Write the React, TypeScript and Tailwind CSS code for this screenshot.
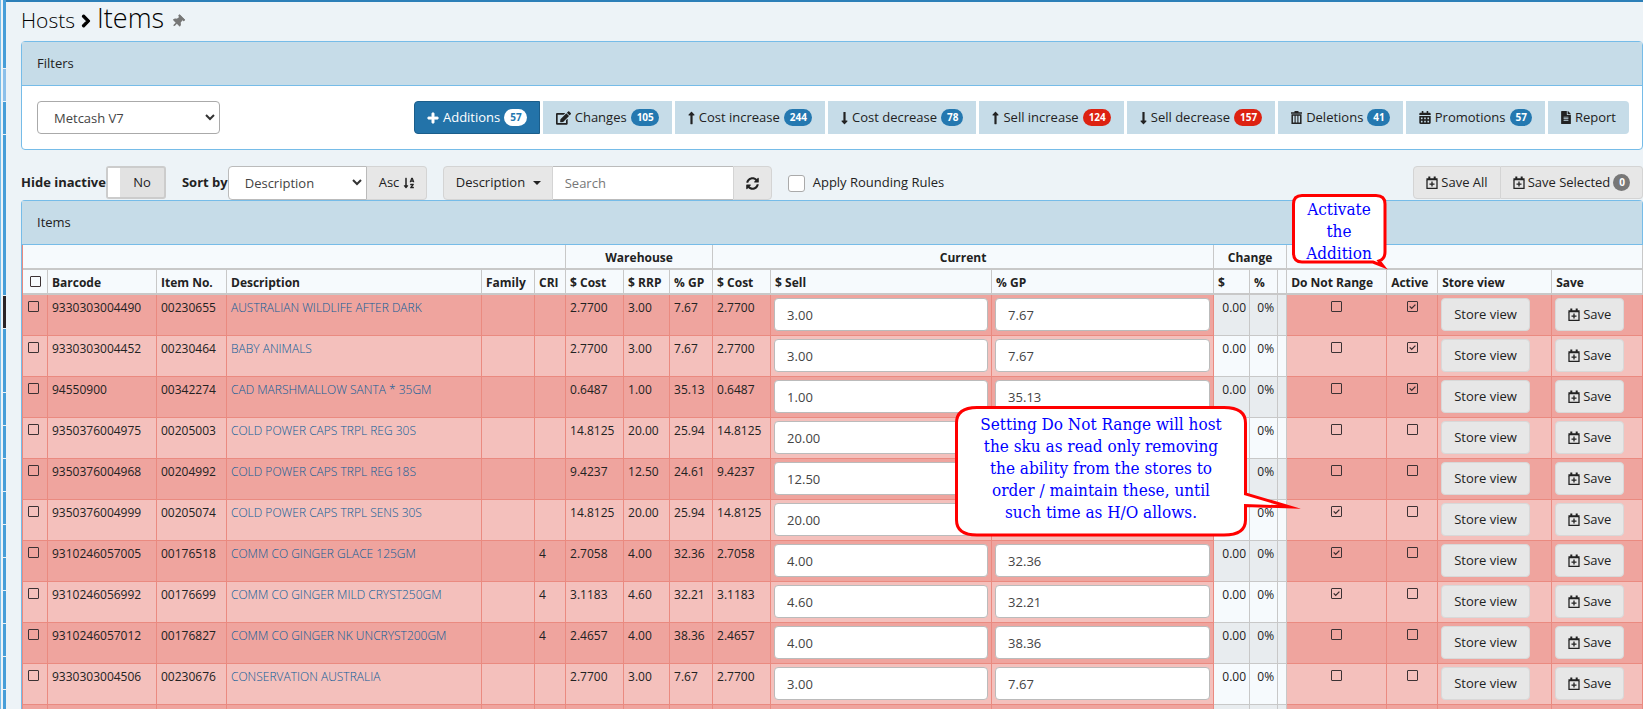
import { useState } from "react";
import type { ReactNode } from "react";
import clsx from "clsx";
import {
  FaCalendarAlt,
  FaChevronRight,
  FaEdit,
  FaFileAlt,
  FaLongArrowAltDown,
  FaLongArrowAltUp,
  FaPlus,
  FaSortAlphaDown,
  FaSyncAlt,
  FaThumbtack,
} from "react-icons/fa";

type Item = {
  barcode: string;
  itemNo: string;
  description: string;
  cri?: string;
  cost: string;
  rrp: string;
  gp: string;
  noRange?: boolean;
  active?: boolean;
};

const items: Item[] = [
  { barcode: "9330303004490", itemNo: "00230655", description: "AUSTRALIAN WILDLIFE AFTER DARK", cost: "2.7700", rrp: "3.00", gp: "7.67", active: true },
  { barcode: "9330303004452", itemNo: "00230464", description: "BABY ANIMALS", cost: "2.7700", rrp: "3.00", gp: "7.67", active: true },
  { barcode: "94550900", itemNo: "00342274", description: "CAD MARSHMALLOW SANTA * 35GM", cost: "0.6487", rrp: "1.00", gp: "35.13", active: true },
  { barcode: "9350376004975", itemNo: "00205003", description: "COLD POWER CAPS TRPL REG 30S", cost: "14.8125", rrp: "20.00", gp: "25.94" },
  { barcode: "9350376004968", itemNo: "00204992", description: "COLD POWER CAPS TRPL REG 18S", cost: "9.4237", rrp: "12.50", gp: "24.61" },
  { barcode: "9350376004999", itemNo: "00205074", description: "COLD POWER CAPS TRPL SENS 30S", cost: "14.8125", rrp: "20.00", gp: "25.94", noRange: true },
  { barcode: "9310246057005", itemNo: "00176518", description: "COMM CO GINGER GLACE 125GM", cri: "4", cost: "2.7058", rrp: "4.00", gp: "32.36", noRange: true },
  { barcode: "9310246056992", itemNo: "00176699", description: "COMM CO GINGER MILD CRYST250GM", cri: "4", cost: "3.1183", rrp: "4.60", gp: "32.21", noRange: true },
  { barcode: "9310246057012", itemNo: "00176827", description: "COMM CO GINGER NK UNCRYST200GM", cri: "4", cost: "2.4657", rrp: "4.00", gp: "38.36" },
  { barcode: "9330303004506", itemNo: "00230676", description: "CONSERVATION AUSTRALIA", cost: "2.7700", rrp: "3.00", gp: "7.67" },
];

function SaveIcon() {
  return (
    <svg viewBox="0 0 12 13" className="h-[13px] w-3 shrink-0" fill="none" stroke="currentColor" aria-hidden="true">
      <path d="M1 4v8.3h10V4" strokeWidth="1.3" />
      <path d="M0.4 3.2h11.2M3.3 0.4v3M8.7 0.4v3" strokeWidth="2" />
      <path d="M6 5.6v5M3.5 8.1h5" strokeWidth="1.3" />
    </svg>
  );
}

function TrashIcon() {
  return (
    <svg viewBox="0 0 11 13" className="h-[13px] w-[11px] shrink-0" fill="none" stroke="currentColor" aria-hidden="true">
      <path d="M0 2h11M3.5 0.7h4" strokeWidth="1.4" />
      <path d="M1.2 4h8.6v8.2H1.2z" strokeWidth="1.5" />
      <path d="M4.100 4v8M6.900 4v8" strokeWidth="1.1" />
    </svg>
  );
}

function TickBox({ label, checked = false }: { label: string; checked?: boolean }) {
  const [on, setOn] = useState(checked);
  return (
    <span className="relative inline-block size-[11px] align-top">
      <input
        type="checkbox"
        aria-label={label}
        checked={on}
        onChange={() => setOn(!on)}
        className="block size-[11px] appearance-none rounded-[1px] border border-[#3c3234]"
      />
      {on && (
        <svg viewBox="0 0 11 11" className="pointer-events-none absolute inset-0 size-[11px]" fill="none" stroke="#3a2c2e" strokeWidth="1.3">
          <path d="M2.7 5.4l2 2L8.4 3.6" />
        </svg>
      )}
    </span>
  );
}

function SelectArrow() {
  return (
    <svg viewBox="0 0 10 7" className="pointer-events-none absolute top-[13px] right-[5px] h-[7px] w-[10px]" fill="none" stroke="#333" strokeWidth="2">
      <path d="M1 1l4 4 4-4" />
    </svg>
  );
}

function Badge({ tone = "blue", children }: { tone?: "blue" | "red" | "white" | "grey"; children: ReactNode }) {
  return (
    <span
      className={clsx(
        "rounded-full pr-[5px] pl-[6px] text-[10px] leading-[17px] font-bold",
        tone === "blue" && "bg-[#2478b0] text-white",
        tone === "red" && "bg-[#dd2211] text-white",
        tone === "white" && "bg-white text-[#2478b0]",
        tone === "grey" && "bg-[#777] text-white",
      )}
    >
      {children}
    </span>
  );
}

const filters: { label: string; icon: ReactNode; count?: string; red?: boolean }[] = [
  { label: "Changes", icon: <FaEdit className="h-[14px] w-[15px]" />, count: "105" },
  { label: "Cost increase", icon: <FaLongArrowAltUp className="h-[14px] w-[7px]" />, count: "244" },
  { label: "Cost decrease", icon: <FaLongArrowAltDown className="h-[14px] w-[7px]" />, count: "78" },
  { label: "Sell increase", icon: <FaLongArrowAltUp className="h-[14px] w-[7px]" />, count: "124", red: true },
  { label: "Sell decrease", icon: <FaLongArrowAltDown className="h-[14px] w-[7px]" />, count: "157", red: true },
  { label: "Deletions", icon: <TrashIcon />, count: "41" },
  { label: "Promotions", icon: <FaCalendarAlt className="h-[13px] w-3" />, count: "57" },
  { label: "Report", icon: <FaFileAlt className="h-[13px] w-[10px]" /> },
];

const columns = [25, 109, 70, 255, 53, 31, 58, 46, 43, 58, 221, 222, 36, 28, 9, 100, 51, 114, 91];
const headings = ["Barcode", "Item No.", "Description", "Family", "CRI", "$ Cost", "$ RRP", "% GP", "$ Cost", "$ Sell", "% GP", "$", "%", "", "Do Not Range", "Active", "Store view", "Save"];

function ItemRow({ item, odd }: { item: Item; odd: boolean }) {
  const cell = "border-r border-b border-[#ea8a80] pt-1 pl-1 align-top";
  const change = clsx("border-r border-b border-[#c8c8c8] pt-1 pr-[3px] text-right align-top", odd ? "bg-[#e8ecef]" : "bg-[#f6fafd]");
  const input = "block h-[33px] w-full rounded-[4px] border border-[#bbb] bg-white px-3 text-[13px] text-[#444]";
  const button = "flex h-[33px] items-center gap-[3px] rounded-[4px] border border-[#d8d8d8] bg-[#e7e7e7] px-3 text-[13px] text-[#222]";
  return (
    <tr className={clsx("h-[41px]", odd ? "bg-[#efa49e]" : "bg-[#f4c0bc]")}>
      <td className="border-r border-b border-[#ea8a80] pt-[6px] pl-[5px] align-top leading-none">
        <TickBox label={`Select ${item.description}`} />
      </td>
      <td className={cell}>{item.barcode}</td>
      <td className={cell}>{item.itemNo}</td>
      <td className={cell}>
        <a href="#item" className="font-light text-[#0a5c98]">{item.description}</a>
      </td>
      <td className={cell} />
      <td className={cell}>{item.cri}</td>
      <td className={cell}>{item.cost}</td>
      <td className={cell}>{item.rrp}</td>
      <td className={cell}>{item.gp}</td>
      <td className={cell}>{item.cost}</td>
      <td className="border-r border-b border-[#ea8a80] px-[3px] pt-[3px] align-top">
        <input aria-label="Sell" defaultValue={item.rrp} className={input} />
      </td>
      <td className="border-r border-b border-[#ea8a80] px-[3px] pt-[3px] align-top">
        <input aria-label="GP" defaultValue={item.gp} className={input} />
      </td>
      <td className={change}>0.00</td>
      <td className={change}>0%</td>
      <td className={change} />
      <td className="border-r border-b border-[#ea8a80] pt-[6px] text-center align-top leading-none">
        <TickBox label="Do Not Range" checked={item.noRange} />
      </td>
      <td className="border-r border-b border-[#ea8a80] pt-[6px] text-center align-top leading-none">
        <TickBox label="Active" checked={item.active} />
      </td>
      <td className="border-r border-b border-[#ea8a80] px-[3px] pt-[3px] align-top">
        <button className={button}>Store view</button>
      </td>
      <td className="border-r border-b border-[#ea8a80] px-[3px] pt-[3px] align-top">
        <button className={button}>
          <SaveIcon />
          Save
        </button>
      </td>
    </tr>
  );
}

function ItemsTable() {
  const group = "border-r border-b-2 border-[#c8c8c8] pt-[2px] text-center font-bold";
  return (
    <table className="w-full table-fixed border-separate border-spacing-0 border-l border-[#ea8a80] text-[12px] leading-[17px]">
      <colgroup>
        {columns.map((width, i) => (
          <col key={i} style={{ width }} />
        ))}
      </colgroup>
      <thead className="bg-[#f6fafd]">
        <tr className="h-[25px]">
          <th colSpan={6} className={group} />
          <th colSpan={3} className={group}>Warehouse</th>
          <th colSpan={3} className={group}>Current</th>
          <th colSpan={3} className={group}>Change</th>
          <th colSpan={4} className={group} />
        </tr>
        <tr className="h-[25px]">
          <th className="border-r border-b-2 border-[#c8c8c8] leading-none">
            <TickBox label="Select all" />
          </th>
          {headings.map((heading, i) => (
            <th key={i} className="border-r border-b-2 border-[#c8c8c8] pt-[2px] pl-1 text-left font-bold whitespace-nowrap">
              {heading}
            </th>
          ))}
        </tr>
      </thead>
      <tbody>
        {items.map((item, i) => (
          <ItemRow key={item.barcode} item={item} odd={i % 2 === 0} />
        ))}
        <tr className="h-[41px] bg-[#efa49e]">
          {columns.map((_, i) => (
            <td key={i} className={clsx("border-r", i > 11 && i < 15 ? "border-[#c8c8c8] bg-[#e8ecef]" : "border-[#ea8a80]")} />
          ))}
        </tr>
      </tbody>
    </table>
  );
}

function Toolbar() {
  const grey = "flex items-center border border-[#d4d4d4] bg-[#e7e7e7]";
  return (
    <div className="flex h-[34px] items-stretch">
      <span className="flex items-center font-bold">Hide inactive</span>
      <button role="switch" aria-checked="false" className="flex h-[33px] w-[60px] rounded-[3px] border-2 border-[#ccc] bg-[#e2e2e2]">
        <span className="h-full w-3 bg-white" />
        <span className="flex h-full flex-1 items-center justify-center">No</span>
      </button>
      <label htmlFor="sort" className="ml-4 flex items-center font-bold">Sort by</label>
      <span className="relative">
        <select id="sort" className="h-full w-[139px] appearance-none rounded-l-[4px] border border-[#bbb] bg-white pt-[2px] pl-4 text-[#444]">
          <option>Description</option>
        </select>
        <SelectArrow />
      </span>
      <button className={clsx(grey, "w-[60px] gap-1 rounded-r-[4px] border-l-0 pl-3")}>
        Asc
        <FaSortAlphaDown className="size-3" />
      </button>
      <button className={clsx(grey, "ml-4 w-[110px] gap-2 rounded-l-[4px] pl-3")}>
        Description
        <span className="border-x-4 border-t-4 border-x-transparent border-t-[#222]" />
      </button>
      <input aria-label="Search" placeholder="Search" className="w-[180px] border-y border-[#bbb] bg-white px-3 pt-[2px] placeholder:text-[#777]" />
      <button aria-label="Refresh" className={clsx(grey, "w-[39px] justify-center rounded-r-[4px]")}>
        <FaSyncAlt className="size-[13px]" />
      </button>
      <label className="ml-4 flex items-center gap-2">
        <input type="checkbox" className="size-[17px] appearance-none rounded-[3px] border border-[#aaa] bg-white" />
        Apply Rounding Rules
      </label>
      <div className="ml-auto flex h-[33px]">
        <button className={clsx(grey, "gap-[3px] rounded-l-[4px] px-3")}>
          <SaveIcon />
          Save All
        </button>
        <button className={clsx(grey, "gap-[3px] rounded-r-[4px] border-l-0 px-3")}>
          <SaveIcon />
          Save Selected
          <Badge tone="grey">0</Badge>
        </button>
      </div>
    </div>
  );
}

function SideRail() {
  return (
    <aside className="flex w-[6px] shrink-0 border-l border-[#76bce8]">
      <div className="ml-[2px] flex w-[3px] flex-col gap-px bg-[#edf3f7]">
        <span className="h-[68px] shrink-0 bg-[#479ed8]" />
        <span className="h-8 shrink-0 bg-[#8cc0ea]" />
        <span className="h-8 shrink-0 bg-[#479ed8]" />
        <span className="h-[160px] shrink-0 bg-[#479ed8]" />
        <span className="h-8 shrink-0 bg-[#2b2326]" />
        <span className="h-[63px] shrink-0 bg-[#479ed8]" />
        {Array.from({ length: 10 }, (_, i) => (
          <span key={i} className="h-8 shrink-0 bg-[#479ed8]" />
        ))}
      </div>
    </aside>
  );
}

function Callouts() {
  return (
    <div className="font-['DejaVu_Serif_Condensed','DejaVu_Serif',serif] text-[17px] leading-[22px] text-[#0000ff]">
      <div className="absolute top-[194px] left-[1292px] h-[76px] w-[96px]">
        <svg viewBox="0 0 96 76" className="absolute inset-0 size-full" fill="#fff" stroke="#f00" strokeWidth="3" strokeMiterlimit="20">
          <path d="M10 1.500H84Q93 1.500 93 10V58Q93 65 87 67L91 72L81 68H10Q1.500 68 1.500 59V10Q1.500 1.500 10 1.500Z" />
        </svg>
        <p className="relative w-[94px] pt-1 text-center">Activate<br />the<br />Addition</p>
      </div>
      <div className="absolute top-[406px] left-[955px] h-[132px] w-[346px]">
        <svg viewBox="0 0 346 132" className="absolute inset-0 size-full" fill="#fff" stroke="#f00" strokeWidth="3" strokeMiterlimit="20">
          <path d="M22 1.500H269Q290.500 1.500 290.500 17V88L335 101L290.500 99.500V114Q290.500 129 269 129H22Q1.500 129 1.500 114V17Q1.500 1.500 22 1.500Z" />
        </svg>
        <p className="relative w-[292px] pt-[7px] text-center whitespace-nowrap">
          Setting Do Not Range will host<br />
          the sku as read only removing<br />
          the ability from the stores to<br />
          order / maintain these, until<br />
          such time as H/O allows.
        </p>
      </div>
    </div>
  );
}

export default function App() {
  return (
    <div className="relative flex h-screen overflow-hidden bg-[#edf3f7] font-['Open_Sans',sans-serif] text-[13px] text-[#222]">
      <SideRail />
      <main className="min-w-0 flex-1 border-t-2 border-[#2c7fb8] pl-[15px]">
        <h1 className="flex h-[39px] items-baseline gap-[6px] text-[21px] leading-8 font-light text-black">
          Hosts
          <FaChevronRight className="h-[14px] w-[10px]" stroke="currentColor" strokeWidth="40" />
          <span className="text-[27px]">Items</span>
          <FaThumbtack className="ml-[2px] h-[13px] w-[12px] rotate-45 self-center text-[#777]" />
        </h1>
        <section className="rounded-[4px] border border-[#76bce8] bg-white">
          <h2 className="flex h-[44px] items-center border-b border-[#76bce8] bg-[#c6dce8] px-[15px]">Filters</h2>
          <div className="flex items-center justify-between py-[15px] pr-[13px] pl-[15px]">
            <span className="relative">
              <select aria-label="Host" className="h-[33px] w-[183px] appearance-none rounded-[4px] border border-[#aaa] bg-white pt-[2px] pl-4 text-[#444]">
                <option>Metcash V7</option>
              </select>
              <SelectArrow />
            </span>
            <div className="flex h-[33px] gap-[3px]">
              <button className="flex items-center gap-1 rounded-l-[4px] border border-[#1b5e8b] bg-[#2373a9] px-3 text-white">
                <FaPlus className="size-3" stroke="currentColor" strokeWidth="30" />
                Additions
                <Badge tone="white">57</Badge>
              </button>
              {filters.map((filter) => (
                <button key={filter.label} className="flex items-center gap-1 bg-[#c6dce8] px-[13px] last:rounded-r-[4px]">
                  {filter.icon}
                  {filter.label}
                  {filter.count && <Badge tone={filter.red ? "red" : "blue"}>{filter.count}</Badge>}
                </button>
              ))}
            </div>
          </div>
        </section>
        <div className="pt-4">
          <Toolbar />
        </div>
        <section className="rounded-t-[4px] border border-b-0 border-[#76bce8]">
          <h2 className="flex h-[44px] items-center border-b border-[#76bce8] bg-[#c6dce8] px-[15px]">Items</h2>
          <ItemsTable />
        </section>
      </main>
      <Callouts />
    </div>
  );
}
